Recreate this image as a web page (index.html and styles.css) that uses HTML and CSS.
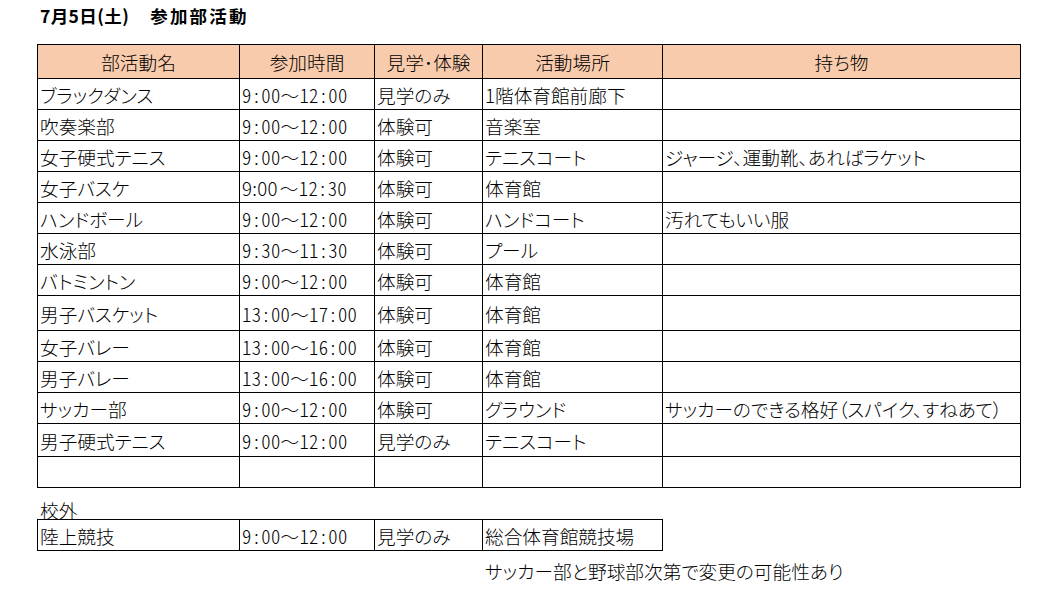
FILE: index.html
```html
<!DOCTYPE html>
<html lang="ja">
<head>
<meta charset="utf-8">
<title>7月5日(土) 参加部活動</title>
<link rel="stylesheet" href="styles.css">
</head>
<body>
<div class="page">
  <h1 class="title"><span class="date">7月5日(土)</span><span class="main">参加部活動</span></h1>

  <div class="sheet main-sheet">
    <div class="cell head">部活動名</div><div class="cell head">参加時間</div><div class="cell head">見学･体験</div><div class="cell head">活動場所</div><div class="cell head">持ち物</div>

    <div class="cell">ブラックダンス</div><div class="cell time">9:00<span class="wave">〜</span>12:00</div><div class="cell">見学のみ</div><div class="cell">1階体育館前廊下</div><div class="cell"></div>
    <div class="cell">吹奏楽部</div><div class="cell time">9:00<span class="wave">〜</span>12:00</div><div class="cell">体験可</div><div class="cell">音楽室</div><div class="cell"></div>
    <div class="cell">女子硬式テニス</div><div class="cell time">9:00<span class="wave">〜</span>12:00</div><div class="cell">体験可</div><div class="cell">テニスコート</div><div class="cell">ジャージ、運動靴、あればラケット</div>
    <div class="cell">女子バスケ</div><div class="cell time"><span class="narrow">9:00</span><span class="wave">〜</span>12:30</div><div class="cell">体験可</div><div class="cell">体育館</div><div class="cell"></div>
    <div class="cell">ハンドボール</div><div class="cell time">9:00<span class="wave">〜</span>12:00</div><div class="cell">体験可</div><div class="cell">ハンドコート</div><div class="cell">汚れてもいい服</div>
    <div class="cell">水泳部</div><div class="cell time">9:30<span class="wave">〜</span>11:30</div><div class="cell">体験可</div><div class="cell">プール</div><div class="cell"></div>
    <div class="cell">バトミントン</div><div class="cell time">9:00<span class="wave">〜</span>12:00</div><div class="cell">体験可</div><div class="cell">体育館</div><div class="cell"></div>
    <div class="cell">男子バスケット</div><div class="cell time">13:00<span class="wave">〜</span>17:00</div><div class="cell">体験可</div><div class="cell">体育館</div><div class="cell"></div>
    <div class="cell">女子バレー</div><div class="cell time">13:00<span class="wave">〜</span>16:00</div><div class="cell">体験可</div><div class="cell">体育館</div><div class="cell"></div>
    <div class="cell">男子バレー</div><div class="cell time">13:00<span class="wave">〜</span>16:00</div><div class="cell">体験可</div><div class="cell">体育館</div><div class="cell"></div>
    <div class="cell">サッカー部</div><div class="cell time">9:00<span class="wave">〜</span>12:00</div><div class="cell">体験可</div><div class="cell">グラウンド</div><div class="cell">サッカーのできる格好（スパイク、すねあて）</div>
    <div class="cell">男子硬式テニス</div><div class="cell time">9:00<span class="wave">〜</span>12:00</div><div class="cell">見学のみ</div><div class="cell">テニスコート</div><div class="cell"></div>
    <div class="cell"></div><div class="cell"></div><div class="cell"></div><div class="cell"></div><div class="cell"></div>
  </div>

  <div class="label">校外</div>

  <div class="sheet outside-sheet">
    <div class="cell">陸上競技</div><div class="cell time">9:00<span class="wave">〜</span>12:00</div><div class="cell">見学のみ</div><div class="cell">総合体育館競技場</div>
  </div>

  <p class="note">サッカー部と野球部次第で変更の可能性あり</p>
</div>
</body>
</html>
```

FILE: styles.css
```css
html, body {
  margin: 0;
  padding: 0;
  background: #ffffff;
}

body {
  font-family: "Noto Sans CJK JP", "Noto Sans", sans-serif;
  color: #000000;
  font-weight: 300;
  font-feature-settings: "palt" 1;
}

.page {
  padding-left: 37px;
  width: 1000px;
}

.title {
  margin: 6px 0 0 3px;
  font-size: 17.5px;
  line-height: 20px;
  font-weight: bold;
  font-feature-settings: "palt" 0;
  display: flex;
  gap: 21px;
}

.title .date {
  letter-spacing: 0.4px;
}

.title .main {
  letter-spacing: 2.2px;
}

.sheet {
  display: grid;
  background: #000000;
  gap: 1px;
  padding: 1px;
  width: max-content;
}

.main-sheet {
  margin-top: 18px;
  grid-template-columns: 201px 134px 107px 179px 357px;
  grid-template-rows: 33px repeat(7, 30px) 34px 30px 30px 30px 32px 30px;
}

.outside-sheet {
  grid-template-columns: 201px 134px 107px 179px;
  grid-template-rows: 30px;
}

.cell {
  background: #ffffff;
  font-size: 18.67px;
  line-height: 1;
  display: flex;
  align-items: center;
  padding: 2px 0 0 2px;
  box-sizing: border-box;
  white-space: nowrap;
  overflow: hidden;
}

.cell.head {
  background: #f8cbad;
  justify-content: center;
  padding: 1px 0 0 0;
}

.cell.time {
  font-feature-settings: "hwid" 1;
  letter-spacing: 0.3px;
}

.cell.time .wave {
  font-feature-settings: normal;
}

.cell.time .narrow {
  font-feature-settings: "palt" 1;
  margin-right: 2px;
}

.label {
  margin: 12px 0 0 3px;
  font-size: 18.67px;
  line-height: 19px;
  height: 19px;
}

.note {
  margin: 10px 0 0 448px;
  font-size: 18.67px;
  line-height: 20px;
}
```
